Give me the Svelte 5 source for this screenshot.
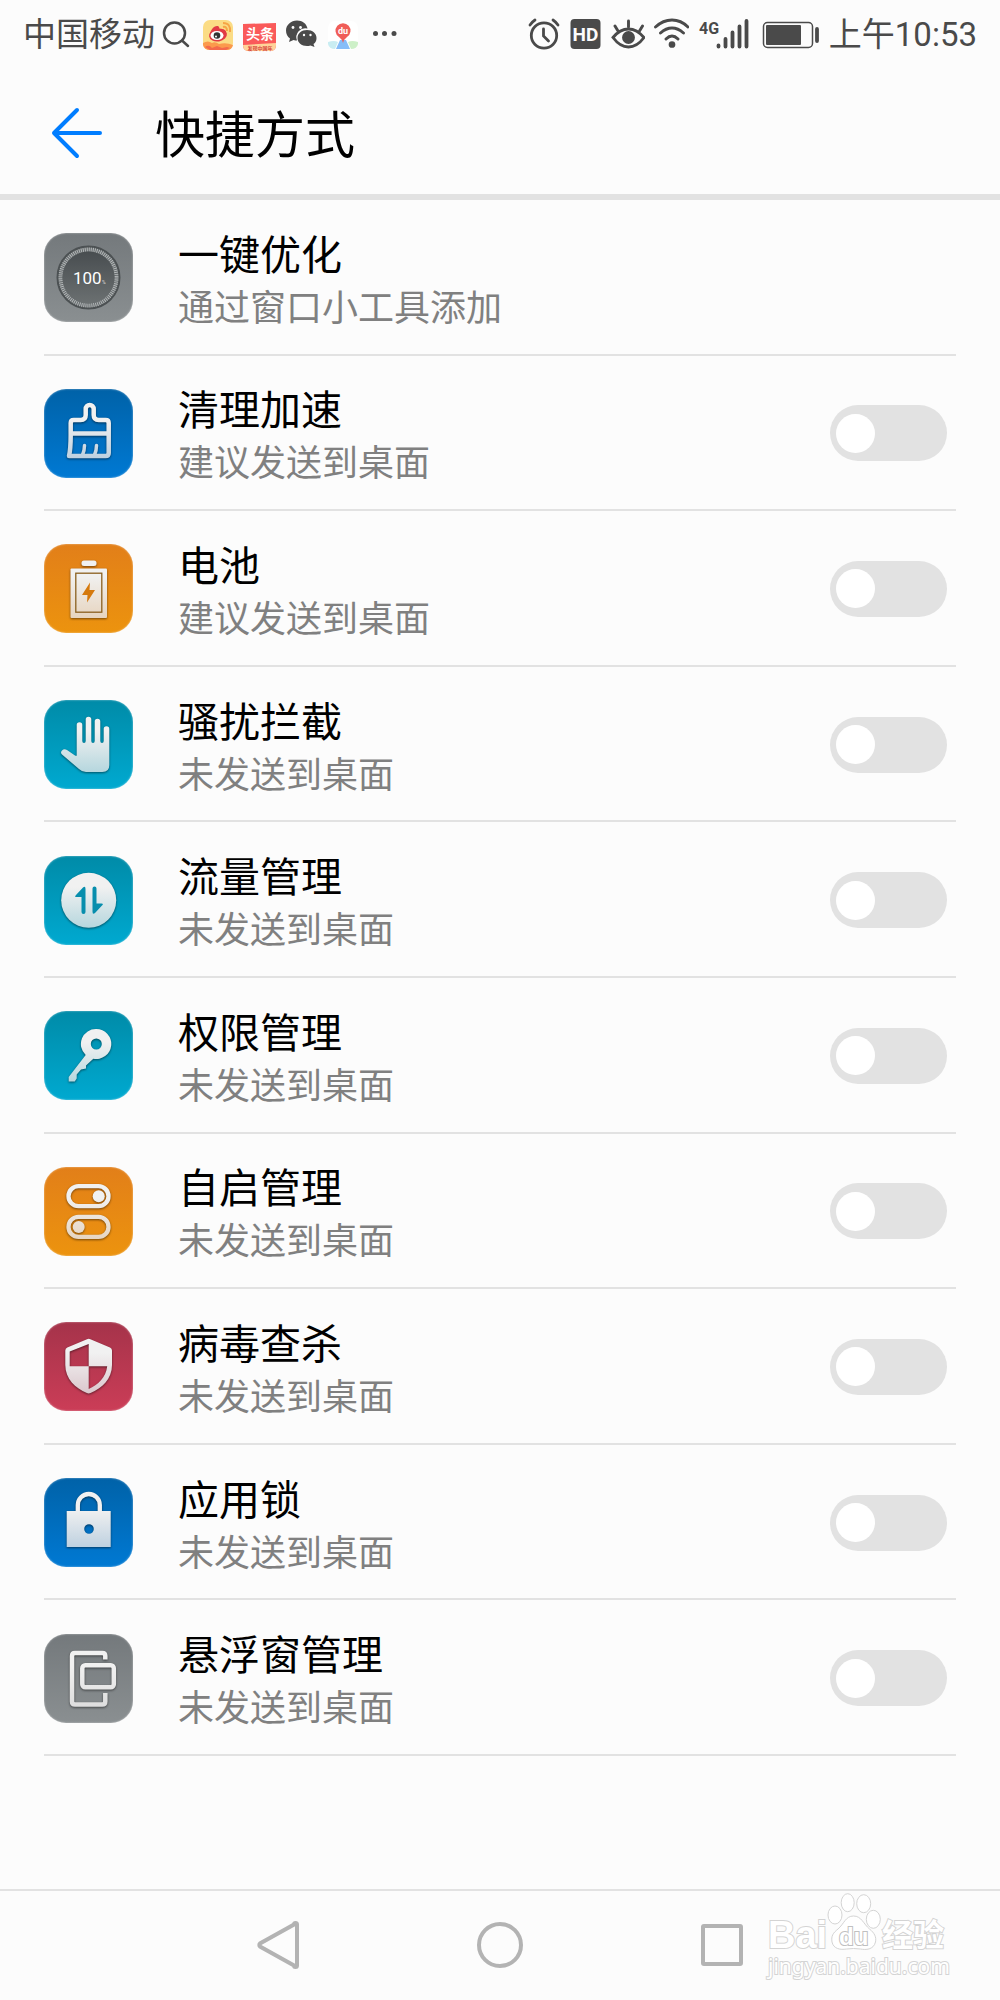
<script lang="ts">
	interface Shortcut {
		id: string;
		title: string;
		status: string;
		tone: string;
		toggle: boolean;
	}

	const shortcuts: Shortcut[] = [
		{ id: 'optimize', title: '一键优化', status: '通过窗口小工具添加', tone: 'grey', toggle: false },
		{ id: 'clean', title: '清理加速', status: '建议发送到桌面', tone: 'blue', toggle: true },
		{ id: 'battery', title: '电池', status: '建议发送到桌面', tone: 'orange', toggle: true },
		{ id: 'block', title: '骚扰拦截', status: '未发送到桌面', tone: 'teal', toggle: true },
		{ id: 'traffic', title: '流量管理', status: '未发送到桌面', tone: 'teal', toggle: true },
		{ id: 'permission', title: '权限管理', status: '未发送到桌面', tone: 'teal', toggle: true },
		{ id: 'autostart', title: '自启管理', status: '未发送到桌面', tone: 'orange', toggle: true },
		{ id: 'virus', title: '病毒查杀', status: '未发送到桌面', tone: 'red', toggle: true },
		{ id: 'lock', title: '应用锁', status: '未发送到桌面', tone: 'blue', toggle: true },
		{ id: 'float', title: '悬浮窗管理', status: '未发送到桌面', tone: 'grey', toggle: true }
	];

	// lower end of the light gradient that fills each glyph
	const shade: Record<string, string> = {
		grey: '#dcdcdc',
		blue: '#b5cbdd',
		orange: '#e6d3bd',
		teal: '#b0d4dc',
		red: '#d9c3c9'
	};

	let enabled: Record<string, boolean> = $state({});
</script>

<div class="screen">
	<div class="status-bar">
		<div class="status-group">
			<span class="carrier">中国移动</span>
			<svg width="34" height="34" viewBox="0 0 34 34" fill="none" stroke="#4a4a4a" stroke-width="2.5" stroke-linecap="round">
				<circle cx="15.5" cy="15" r="10.5" />
				<path d="M23 22.5 29 28" />
			</svg>
			<svg width="34" height="34" viewBox="0 0 34 34">
				<rect x="2" y="2" width="30" height="30" rx="7" fill="#fbdc85" />
				<path d="M2 25q5-3 9 0 3-2 7 1 7-2 14 1-1 5-6 5H9q-6 0-7-5Z" fill="#fb9a4c" />
				<path d="M4 29q4-3 7 1l5-2 5 2 5-1 3 1-4 2H9Z" fill="#f4694b" />
				<ellipse cx="17" cy="17" rx="9" ry="6.5" transform="rotate(-9 17 17)" fill="#e23b45" />
				<path d="M9 15q3-8 8-7 2 1 1 4 6-2 7 2Z" fill="#e23b45" />
				<ellipse cx="16" cy="17.5" rx="6.5" ry="4.5" fill="#fff" />
				<circle cx="16" cy="17.5" r="3.3" fill="#333" />
				<circle cx="15" cy="18.5" r="1" fill="#fff" />
				<path d="M22 5q8 0 7 9M22 9q4-1 4 4" fill="none" stroke="#f6a546" stroke-width="2" />
			</svg>
			<svg width="34" height="34" viewBox="0 0 34 34">
				<path d="M0 6 33 5V27q0 6-6 6H6q-6 0-6-6Z" fill="#fa5a5a" />
				<path d="M0 27 33 25v2q0 6-6 6H6q-6 0-6-6Z" fill="#ffd39a" />
				<text x="17" y="21" text-anchor="middle" class="badge-main">头条</text>
				<text x="17" y="32" text-anchor="middle" class="badge-sub">发现中国年</text>
			</svg>
			<svg width="34" height="34" viewBox="0 0 34 34" fill="#4a4a4a">
				<path d="M12 2.5C6 2.5 1 7 1 12.500q0 5 4 8l-1 3.500 4.500-2q2 .5 3.500.5a9 9 0 0 1 10.500-12C21.500 5.500 17.500 2.500 12 2.500Z" />
				<path d="M22 12c5.500 0 9.500 3.500 9.500 8q0 4-3 6l1 3-4-1.500q-2 .5-3.500.5c-5.500 0-9.500-3.500-9.500-8s4-8 9.500-8Z" />
				<g fill="#fcfcfc">
					<circle cx="8" cy="9.5" r="1.4" /><circle cx="15.5" cy="9.5" r="1.4" />
					<circle cx="19" cy="17" r="1.2" /><circle cx="25.5" cy="17" r="1.2" />
				</g>
			</svg>
			<svg width="34" height="34" viewBox="0 0 34 34">
				<rect x="1" y="3" width="30" height="29" rx="7" fill="#fff" />
				<path d="M1 24q6-2 10 0l-3 7q-6 0-7-5Z" fill="#c9edf2" />
				<path d="M31 24q-6-2-10 0l3 7q6 0 7-5Z" fill="#cdf0c8" />
				<path d="m13 22-4 9h14l-4-9Z" fill="#86bdf8" />
				<path d="M16 25q-1-4-4-6a7.500 7.500 0 1 1 8 0q-3 2-4 6Z" fill="#f05d58" />
				<text x="16" y="16" text-anchor="middle" class="pin-text">du</text>
			</svg>
			<svg width="34" height="34" viewBox="0 0 34 34" fill="#4a4a4a">
				<circle cx="6.5" cy="15.5" r="2.5" /><circle cx="15.5" cy="15.5" r="2.5" /><circle cx="25" cy="15.5" r="2.5" />
			</svg>
		</div>
		<div class="status-group">
			<svg width="34" height="34" viewBox="0 0 34 34" fill="none" stroke="#4a4a4a" stroke-width="2.8" stroke-linecap="round">
				<circle cx="17" cy="17.5" r="12.7" />
				<path d="M16.500 11v7l5 5M3 7q2-3 5-5M31 7q-2-3-5-5" />
			</svg>
			<svg width="34" height="34" viewBox="0 0 34 34">
				<rect x="1.5" y="1" width="30" height="30" rx="4" fill="#4a4a4a" />
				<text x="16.5" y="22.5" text-anchor="middle" class="hd-text">HD</text>
			</svg>
			<svg width="34" height="34" viewBox="0 0 34 34" fill="none" stroke="#4a4a4a" stroke-width="2.9" stroke-linecap="round">
				<path d="M2 19.500Q9 11 17.500 11T33 19.500Q26 29 17.500 29T2 19.500ZM17.500 3v6M4 8l3 5M31.500 8l-3 5" />
				<circle cx="17.5" cy="19.5" r="5" fill="#4a4a4a" />
			</svg>
			<svg width="36" height="34" viewBox="0 0 36 34" fill="none" stroke="#4a4a4a" stroke-width="2.9" stroke-linecap="round">
				<path d="M2.500 9Q10 2 19 2t16 7M7.500 15q5.500-5 11.500-5t11.500 5M13 21q3-3 6-3t6 3" />
				<circle cx="19" cy="26.5" r="1.9" fill="#4a4a4a" />
			</svg>
			<svg width="52" height="34" viewBox="0 0 52 34" fill="none" stroke="#4a4a4a" stroke-width="3.8" stroke-linecap="round">
				<text x="2" y="16" class="net-text">4G</text>
				<path d="M21.500 27.500v1M28.500 21v7.500M35.500 14.500v14M42.500 8.500v20M49.500 3v25.500" />
			</svg>
			<svg width="64" height="34" viewBox="0 0 64 34">
				<rect x="6.5" y="4.5" width="49" height="25" rx="4" fill="none" stroke="#4a4a4a" stroke-width="1.5" />
				<rect x="9" y="7" width="35" height="20" rx="1" fill="#4a4a4a" />
				<path d="M60 11v12" stroke="#4a4a4a" stroke-width="3.8" stroke-linecap="round" />
			</svg>
			<time>上午10:53</time>
		</div>
	</div>

	<header>
		<button class="back" aria-label="返回">
			<svg width="52" height="52" viewBox="0 0 52 52" fill="none" stroke="#007dff" stroke-width="4" stroke-linecap="round" stroke-linejoin="round">
				<path d="M49 26H3M26 3 3 26l23 23" />
			</svg>
		</button>
		<h1>快捷方式</h1>
	</header>

	<ul class="shortcuts">
		{#each shortcuts as item (item.id)}
			<li>
				<div class="tile {item.tone}">
					<svg viewBox="0 0 89 89" fill="none">
						<defs>
							<linearGradient id="shade-{item.id}" gradientUnits="userSpaceOnUse" x1="0" y1="16" x2="0" y2="76">
								<stop offset="0.25" stop-color="#f1f1f1" />
								<stop offset="1" stop-color={shade[item.tone]} />
							</linearGradient>
							<linearGradient id="dial-{item.id}" x1="0" y1="0" x2="0" y2="1">
								<stop offset="0" stop-color="#484d50" />
								<stop offset="1" stop-color="#6b7071" />
							</linearGradient>
						</defs>
						{#if item.id === 'optimize'}
							<circle cx="44.5" cy="44.5" r="31" fill="#666b6d" stroke="#4c5153" stroke-width="2" />
							<circle cx="44.5" cy="44.5" r="28" stroke="#b4b8b9" stroke-width="4" stroke-dasharray="1 1" />
							<circle cx="44.5" cy="44.5" r="26" fill="url(#dial-{item.id})" />
							<text x="29" y="51" class="dial-value">100</text>
							<text x="58" y="51" class="dial-unit">%</text>
						{:else}
							<g class="glyph" fill="url(#shade-{item.id})">
								{#if item.id === 'clean'}
									<g fill="none" stroke="url(#shade-{item.id})" stroke-width="4.5" stroke-linecap="round" stroke-linejoin="round">
										<path d="M26.700 46V34q0-3 3-3h7q5 0 5-5v-6a4 4 0 0 1 8 0v6q0 5 5 5h7q3 0 3 3v30q0 3-3 3H25q1.700-7 1.700-21Z" />
										<path d="M28 44.500h36" stroke-linecap="butt" />
										<path d="M40.500 56.500q0 5-2 9.500M52.500 56.500q0 5-2 9.500" stroke-width="3.5" />
									</g>
								{:else if item.id === 'battery'}
									<rect x="37.5" y="16.5" width="15" height="5.5" rx="2.5" />
									<rect x="26.5" y="24.5" width="36.5" height="49.5" rx="1" />
									<rect x="31.8" y="29.2" width="26" height="39" fill="none" stroke="#8b601f" stroke-width="1.3" />
									<path d="M46 38.500 38 51h5.500L43 58.500 51 46h-5.500Z" fill="#d5790d" />
								{:else if item.id === 'block'}
									<path d="M32.700 55V25a2.800 2.800 0 0 1 5.600 0v16q0 2 1.700 2t1.700-2V19.500a2.800 2.800 0 0 1 5.600 0V41q0 2 1.700 2t1.700-2V21.500a2.800 2.800 0 0 1 5.600 0V41q0 2 1.700 2t1.700-2V29a2.800 2.800 0 0 1 5.600 0v36q0 7-7 7H42q-4 0-7-3L18 54.500q-2-2 0-4t5-.5l8 5.500q1.700 1 1.700-.5Z" />
								{:else if item.id === 'traffic'}
									<circle cx="44.7" cy="44.3" r="27.5" />
									<g fill="#078ead">
										<path d="M41.500 33v23a2 2 0 0 1-4 0V41h-5q-2.500 0-.5-2l7-7.500q2.500-2 2.500 1.500Z" />
										<path d="M41.500 33v23a2 2 0 0 1-4 0V41h-5q-2.500 0-.5-2l7-7.500q2.500-2 2.500 1.500Z" transform="rotate(180 45 44.3)" />
									</g>
								{:else if item.id === 'permission'}
									<path fill-rule="evenodd" d="M52.300 18a15 15 0 1 1-3 29.700L42 54.500v3l-5 1-4.300 5v4l-2 3h-6V66l17-22A15 15 0 0 1 52.300 18Zm0 9.500a5.500 5.500 0 1 0 0 11 5.500 5.500 0 0 0 0-11Z" />
								{:else if item.id === 'autostart'}
									<rect x="24.5" y="19.2" width="40" height="20" rx="10" fill="none" stroke="url(#shade-{item.id})" stroke-width="4.3" />
									<circle cx="54.7" cy="29.2" r="6" />
									<rect x="24.5" y="49.9" width="40" height="20" rx="10" fill="none" stroke="url(#shade-{item.id})" stroke-width="4.3" />
									<circle cx="34.7" cy="59.9" r="6" />
								{:else if item.id === 'virus'}
									<path fill-rule="evenodd" d="M43 17.200q1.700-1 3.400 0L66 25.500q2 1 2 3V43c0 14-10 23-21.500 28q-1.800.8-3.600 0C31.500 66 21.300 57 21.300 43V28.500q0-2 2-3Zm1.700 4.800-19 7.500V44.300h19Zm0 22.300V67C54 63 62 55.500 63.200 44.300Z" />
								{:else if item.id === 'lock'}
									<path d="M33.800 34v-7a11 11 0 0 1 22 0v7" fill="none" stroke="url(#shade-{item.id})" stroke-width="4.3" />
									<path fill-rule="evenodd" d="M22.700 33h44v36h-44ZM45 46.200a4.800 4.800 0 1 0 0 9.600 4.800 4.800 0 0 0 0-9.600Z" />
								{:else}
									<g fill="none" stroke="url(#shade-{item.id})" stroke-width="4.5" stroke-linejoin="round">
										<path d="M61.300 25.500V22q0-3-3-3H31q-3 0-3 3v45.500q0 3 3 3h27.300q3 0 3-3V59" />
										<rect x="38.3" y="31.3" width="31.5" height="22" rx="3" />
									</g>
								{/if}
							</g>
						{/if}
					</svg>
				</div>
				<label for="switch-{item.id}" class="info">
					<span class="title">{item.title}</span>
					<span class="status">{item.status}</span>
				</label>
				{#if item.toggle}
					<input id="switch-{item.id}" class="switch" type="checkbox" role="switch" bind:checked={enabled[item.id]} />
				{/if}
			</li>
		{/each}
	</ul>

	<nav>
		<button aria-label="后退">
			<svg width="48" height="48" viewBox="0 0 48 48"><path d="M41 3.500a1 1 0 0 1 3 0v41a1 1 0 0 1-3 0L7 25.500a2 2 0 0 1 0-3Z" /></svg>
		</button>
		<button aria-label="主屏幕">
			<svg width="48" height="48" viewBox="0 0 48 48"><circle cx="24" cy="24" r="21" /></svg>
		</button>
		<button aria-label="最近任务">
			<svg width="48" height="48" viewBox="0 0 48 48"><rect x="4" y="5" width="38" height="38" rx="1" /></svg>
		</button>
		<svg class="brand" width="200" height="100" viewBox="0 0 200 100">
			<text x="8" y="63" class="brand-latin">Bai</text>
			<ellipse cx="75" cy="30" rx="7" ry="9" />
			<ellipse cx="87.7" cy="17.7" rx="6.5" ry="9" />
			<ellipse cx="103.7" cy="18.7" rx="7" ry="9" />
			<ellipse cx="113.3" cy="34.3" rx="7" ry="9" />
			<path d="M93.500 31c8 0 10 8 16 13 5 4 7 8 6 13-2 8-10 8-15 7q-7-1-14 0c-6 1-13 0-14.500-7-1-6 1-9 6-13 6-5 7.500-13 15.500-13Z" />
			<text x="79" y="60" class="brand-du">du</text>
			<text x="122" y="61" class="brand-cjk">经验</text>
			<text x="8" y="89" class="brand-url">jingyan.baidu.com</text>
		</svg>
	</nav>
</div>

<style>
	:global(body) {
		background: #fcfcfc;
	}

	.screen {
		min-height: 100vh;
		display: flex;
		flex-direction: column;
		background: #fcfcfc;
		color: #000;
		font-family: Roboto, 'Noto Sans CJK SC', sans-serif;
	}

	svg {
		display: block;
		flex-shrink: 0;
	}

	button {
		padding: 0;
		border: 0;
		background: none;
		cursor: pointer;
	}

	.status-bar {
		height: 70px;
		padding: 0 23px;
		display: flex;
		align-items: center;
		justify-content: space-between;
		color: #4a4a4a;
		font-size: 33px;
		line-height: 40px;
		white-space: nowrap;
	}

	.status-group {
		display: flex;
		align-items: center;
		gap: 8px;
	}

	.carrier {
		margin-right: -4px;
	}

	.badge-main {
		font-size: 14px;
		font-weight: 700;
		fill: #fff;
	}

	.badge-sub {
		font-size: 5px;
		font-weight: 700;
		fill: #d8433c;
	}

	.pin-text {
		font-size: 9px;
		font-weight: 700;
		fill: #fff;
	}

	.hd-text {
		font-size: 19px;
		font-weight: 700;
		fill: #fcfcfc;
	}

	.net-text {
		font-size: 16px;
		font-weight: 700;
		fill: #4a4a4a;
		stroke: none;
	}

	header {
		height: 124px;
		padding: 2px 51px 0;
		box-sizing: border-box;
		display: flex;
		align-items: center;
		gap: 52px;
	}

	h1 {
		margin: 0;
		padding-top: 6px;
		font-size: 50px;
		font-weight: 400;
		line-height: 60px;
	}

	.shortcuts {
		flex: 1;
		display: grid;
		grid-auto-rows: 1fr;
		margin: 0 0 133px;
		padding: 0 44px;
		border-top: 6px solid #e2e2e2;
		list-style: none;
	}

	li {
		display: flex;
		align-items: center;
		padding: 2px 9px 0 0;
		border-bottom: 2px solid #e2e2e2;
	}

	.tile {
		width: 89px;
		height: 89px;
		flex-shrink: 0;
		border-radius: 22px;
		box-shadow: inset 0 0 2px rgba(255, 255, 255, 0.6);
	}

	.grey {
		background: linear-gradient(#74797c, #8a8f91);
	}

	.blue {
		background: linear-gradient(#0062a8, #0079d3);
	}

	.orange {
		background: linear-gradient(#e27f19, #ec930e);
	}

	.teal {
		background: linear-gradient(#008ba8, #00a9d0);
	}

	.red {
		background: linear-gradient(#a5334a, #cb3d57);
	}

	.glyph {
		filter: drop-shadow(0 1px 1px rgba(0, 0, 0, 0.5));
	}

	.dial-value {
		font-size: 17px;
		fill: #fff;
	}

	.dial-unit {
		font-size: 5px;
		fill: #ddd;
	}

	.info {
		flex: 1;
		min-width: 0;
		margin-left: 45px;
		padding-top: 6px;
		display: flex;
		flex-direction: column;
	}

	.title {
		font-size: 41px;
		line-height: 56px;
	}

	.status {
		color: #808080;
		font-size: 36px;
		line-height: 50px;
	}

	.switch {
		appearance: none;
		width: 117px;
		height: 56px;
		margin: 0;
		padding: 0 6px;
		display: flex;
		align-items: center;
		flex-shrink: 0;
		border-radius: 28px;
		background: #e2e2e2;
		cursor: pointer;
	}

	.switch::before {
		content: '';
		width: 39px;
		height: 39px;
		border-radius: 50%;
		background: #fff;
	}

	.switch:checked {
		justify-content: flex-end;
		background: #007dff;
	}

	nav {
		position: relative;
		height: 107px;
		padding: 0 166px 2px;
		display: flex;
		border-top: 2px solid #e2e2e2;
	}

	nav button {
		flex: 1;
		display: flex;
		align-items: center;
		justify-content: center;
	}

	nav button svg {
		fill: none;
		stroke: #b3b3b3;
		stroke-width: 4;
	}

	.brand {
		position: absolute;
		right: 40px;
		bottom: 15px;
		fill: #fff;
		stroke: #d4d4d4;
		stroke-width: 1;
		pointer-events: none;
	}

	.brand text {
		paint-order: stroke;
		stroke-width: 2;
	}

	.brand-latin {
		font: 700 38px 'Liberation Sans', sans-serif;
	}

	.brand-du {
		font: 700 24px 'Liberation Sans', sans-serif;
		stroke: #c0c0c0;
	}

	.brand-cjk {
		font: 700 31px 'Noto Sans CJK SC', sans-serif;
	}

	.brand-url {
		font: 400 21px 'Noto Sans', sans-serif;
	}
</style>
